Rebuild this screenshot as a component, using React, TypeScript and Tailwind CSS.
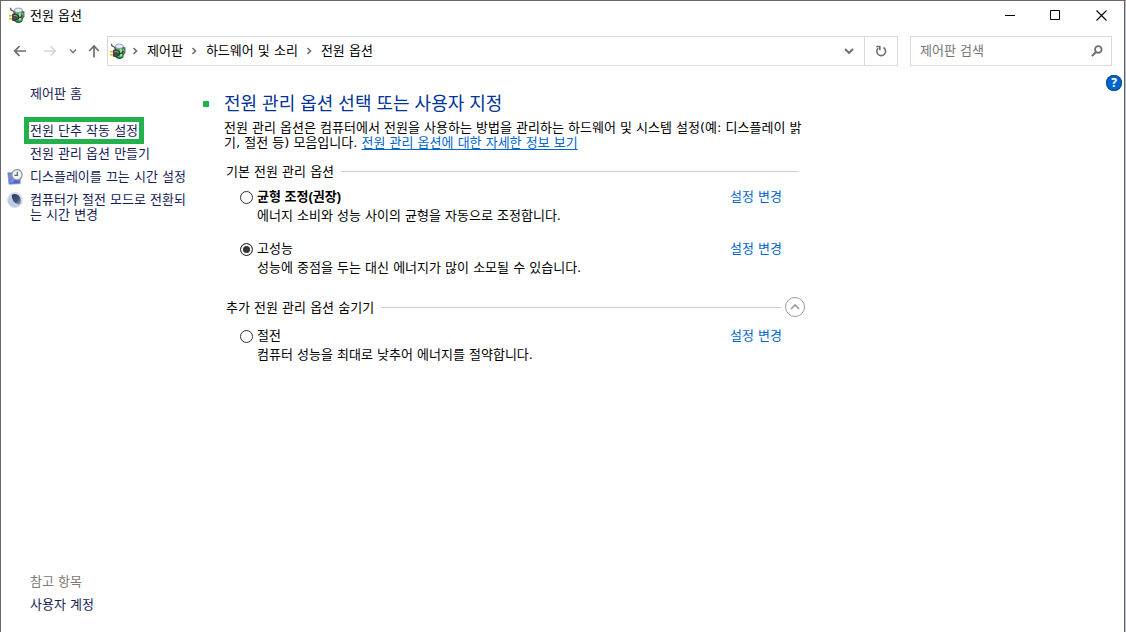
import type { ReactNode } from "react"

type Plan = {
  id: string
  name: string
  description: string
  recommended?: boolean
}

const mainPlans: Plan[] = [
  { id: "balanced", name: "균형 조정(권장)", description: "에너지 소비와 성능 사이의 균형을 자동으로 조정합니다.", recommended: true },
  { id: "high", name: "고성능", description: "성능에 중점을 두는 대신 에너지가 많이 소모될 수 있습니다." },
]

const extraPlans: Plan[] = [
  { id: "saver", name: "절전", description: "컴퓨터 성능을 최대로 낮추어 에너지를 절약합니다." },
]

const crumbs = ["제어판", "하드웨어 및 소리", "전원 옵션"]

function PowerIcon() {
  return (
    <svg width="17" height="17" viewBox="0 0 17 17" className="shrink-0" aria-hidden="true">
      <path d="M13 5h1.800v4.500L13 12" fill="none" stroke="#5b665d" strokeWidth="1.300" />
      <path d="M5.500 3.500h7.700v10.300q-3.800 3.400-7.700 0z" fill="#3fb152" stroke="#45584a" strokeWidth=".8" />
      <path d="M11 6v7.500" stroke="#9cf0a4" strokeWidth="1.600" />
      <path d="M6 13.800q3.400 2.600 7 0" fill="none" stroke="#22763a" strokeWidth="1.600" />
      <ellipse cx="9.300" cy="3.300" rx="3.900" ry="2.300" fill="#e3e9f7" stroke="#8990a0" strokeWidth=".8" />
      <path d="M1.500.800c-.2 2 .6 2.600 2 2.800 1.500.200 1.300 1.600 1.800 3" fill="none" stroke="#55585e" strokeWidth="1.200" />
      <path d="M0 8.700h4M0 11.700h4" stroke="#e3b90f" strokeWidth="1.500" />
      <path d="M3.600 7h3l3 1.700v3l-3 1.700h-3z" fill="#4a4a50" stroke="#26262a" strokeWidth=".8" />
      <path d="M4.500 8.500h2.300l1.700.900" fill="none" stroke="#a5a5ac" strokeWidth=".9" />
      <path d="M9.500 10.300h1.600q1.900 0 1.900-2.300" fill="none" stroke="#3a3a3e" strokeWidth="1.300" />
    </svg>
  )
}

function DisplayIcon() {
  return (
    <svg width="16" height="16" viewBox="0 0 16 16" className="shrink-0" aria-hidden="true">
      <path d="M.8 3.800h12.400v10.900l-11.200.500z" fill="#4a63d8" stroke="#9aa0b4" strokeWidth=".9" />
      <path d="M1.800 4.800h5v8.500l-4 .6z" fill="#6f8bf0" />
      <circle cx="10" cy="5.800" r="5.200" fill="#f2f3f5" stroke="#909499" strokeWidth="1.300" />
      <path d="M10.300 2.800v3.500H7.500" fill="none" stroke="#55606f" strokeWidth="1.200" />
    </svg>
  )
}

function SleepIcon() {
  return (
    <svg width="16" height="16" viewBox="0 0 16 16" className="shrink-0" aria-hidden="true">
      <defs>
        <linearGradient id="moon-body" x1="1" y1="0" x2="0" y2="1">
          <stop offset="0" stopColor="#e9ebef" />
          <stop offset="1" stopColor="#a9bfe8" />
        </linearGradient>
        <linearGradient id="moon-shade" x1="0" y1="0" x2="1" y2="1">
          <stop offset="0" stopColor="#2b3a55" />
          <stop offset=".6" stopColor="#44557a" />
          <stop offset="1" stopColor="#9aa7c0" />
        </linearGradient>
      </defs>
      <circle cx="8" cy="8" r="7.400" fill="url(#moon-body)" stroke="#d3d8e0" strokeWidth=".8" />
      <path d="M4.800 2.800Q8 1 11 3q3.300 2.400 2.700 7.500-.5 2-2 2-3.200-.4-5.200-3.200T4.800 2.800z" fill="url(#moon-shade)" />
    </svg>
  )
}

function Chevron({ className }: { className: string }) {
  return (
    <svg width="8" height="8" viewBox="0 0 8 8" className={className} fill="none" stroke="currentColor" strokeWidth="1.600" aria-hidden="true">
      <path d="M2.500 1 5.500 4l-3 3" />
    </svg>
  )
}

function TitleBar() {
  return (
    <header className="flex h-7 items-center pl-2">
      <PowerIcon />
      <h1 className="ml-1 flex-1 text-[13px] leading-[15px]">전원 옵션</h1>
      <button type="button" aria-label="최소화" className="flex h-7 w-[46px] items-center justify-center">
        <svg width="11" height="11" viewBox="0 0 11 11" stroke="#000"><path d="M1 5.500h10" /></svg>
      </button>
      <button type="button" aria-label="최대화" className="flex h-7 w-[46px] items-center justify-center">
        <svg width="11" height="11" viewBox="0 0 11 11" fill="none" stroke="#000"><path d="M.5.500h9v9h-9z" /></svg>
      </button>
      <button type="button" aria-label="닫기" className="flex h-7 w-[46px] items-center justify-center">
        <svg width="11" height="11" viewBox="0 0 11 11" stroke="#000" strokeWidth="1.100"><path d="m.5.500 10 10m0-10-10 10" /></svg>
      </button>
    </header>
  )
}

function NavBar() {
  return (
    <div className="flex items-center pt-[7px] pr-3 pl-3">
      <button type="button" aria-label="뒤로" className="w-4 text-[#6d6d6d]">
        <svg width="14" height="12" viewBox="0 0 14 12" fill="none" stroke="currentColor" strokeWidth="1.700"><path d="M13 6H2M6.500 1.200 1.700 6l4.800 4.800" /></svg>
      </button>
      <button type="button" aria-label="앞으로" className="ml-[14px] w-4 text-[#d5d5d5]">
        <svg width="14" height="12" viewBox="0 0 14 12" fill="none" stroke="currentColor" strokeWidth="1.500"><path d="M1 6h11M7.500 1.200 12.300 6l-4.800 4.800" /></svg>
      </button>
      <button type="button" aria-label="최근 위치" className="ml-[10px] w-2 text-[#7b7b7b]">
        <Chevron className="rotate-90" />
      </button>
      <button type="button" aria-label="위로" className="ml-[11px] w-[14px] text-[#6d6d6d]">
        <svg width="12" height="14" viewBox="0 0 12 14" fill="none" stroke="currentColor" strokeWidth="1.700"><path d="M6 13.500V2M1.200 7 6 2l4.800 5" /></svg>
      </button>
      <nav aria-label="주소" className="ml-[5px] flex h-[30px] flex-1 items-center border border-[#d9d9d9] pl-[2px]">
        <PowerIcon />
        {crumbs.map((crumb) => (
          <span key={crumb} className="flex items-center pr-[3px]">
            <Chevron className="mr-2 ml-1 text-[#6d6d6d]" />
            <a href="#" className="pb-[2px] text-[13px] leading-[15px]">{crumb}</a>
          </span>
        ))}
        <button type="button" aria-label="이전 위치" className="ml-auto flex w-[31px] justify-center text-[#6d6d6d]">
          <svg width="10" height="8" viewBox="0 0 10 8" fill="none" stroke="currentColor" strokeWidth="1.900"><path d="m1 2 4 4 4-4" /></svg>
        </button>
        <button type="button" aria-label="새로 고침" className="flex h-full w-[33px] items-center justify-center border-l border-[#d9d9d9] text-[#6d6d6d]">
          <svg width="12" height="12" viewBox="0 0 12 12" fill="none" stroke="currentColor" strokeWidth="1.600">
            <path d="M8.500 2.500A4.400 4.400 0 1 1 3.200 3" />
            <path d="M1.200 1.500h3.600v3.800" />
          </svg>
        </button>
      </nav>
      <form className="ml-3 flex h-[30px] w-[202px] items-center border border-[#d9d9d9] pr-2 pl-[9px]">
        <input type="search" aria-label="제어판 검색" placeholder="제어판 검색" className="min-w-0 flex-1 pb-[2px] text-[13px] leading-[15px] outline-none placeholder:text-[#767676]" />
        <button type="submit" aria-label="검색">
          <svg width="12" height="12" viewBox="0 0 12 12" fill="none" stroke="#6d6d6d"><circle cx="7.300" cy="4.500" r="3.300" strokeWidth="1.700" /><path d="M5 7 .8 11.200" strokeWidth="1.900" /></svg>
        </button>
      </form>
    </div>
  )
}

function SideLink({ icon, children }: { icon?: ReactNode; children: ReactNode }) {
  return (
    <li className="flex items-start gap-[7px]">
      <span className="h-[15px] w-4 shrink-0">{icon}</span>
      <a href="#">{children}</a>
    </li>
  )
}

function Sidebar() {
  return (
    <aside className="flex w-[190px] shrink-0 flex-col pt-5 pb-5 pl-[6px] text-[#151c55]">
      <a href="#" className="pl-[23px]">제어판 홈</a>
      <ul className="mt-[22px] flex flex-col gap-2">
        <SideLink>
          <span className="outline-5 outline-offset-1 outline-[#22b14c]">전원 단추 작동 설정</span>
        </SideLink>
        <SideLink>전원 관리 옵션 만들기</SideLink>
        <SideLink icon={<DisplayIcon />}>디스플레이를 끄는 시간 설정</SideLink>
        <SideLink icon={<SleepIcon />}>컴퓨터가 절전 모드로 전환되는 시간 변경</SideLink>
      </ul>
      <div className="mt-auto flex flex-col gap-2 pl-[23px]">
        <h2 className="text-[#7f7a75]">참고 항목</h2>
        <a href="#">사용자 계정</a>
      </div>
    </aside>
  )
}

function PlanRow({ plan, checked }: { plan: Plan; checked?: boolean }) {
  return (
    <div className="flex items-start pr-[23px] pl-4">
      <input
        type="radio"
        name="plan"
        id={plan.id}
        defaultChecked={checked}
        className="mt-[2px] size-[13px] shrink-0 appearance-none rounded-full border border-[#333] bg-white checked:bg-[#333] checked:inset-ring-2 checked:inset-ring-white"
      />
      <div className="ml-1 flex-1">
        <label
          htmlFor={plan.id}
          className={plan.recommended ? "block font-['Liberation_Sans','Noto_Sans_CJK_KR',sans-serif] font-bold" : "block"}
        >
          {plan.name}
        </label>
        <p className="mt-1">{plan.description}</p>
      </div>
      <a href="#" className="text-[#0066cc]">설정 변경</a>
    </div>
  )
}

function PowerOptions() {
  return (
    <main className="w-full max-w-[602px] pt-7">
      <div className="flex items-center">
        <span className="size-[6px] bg-[#22b14c]" />
        <h2 className="ml-[15px] font-['Liberation_Sans','Noto_Sans_CJK_KR',sans-serif] text-lg leading-5 text-[#003399]">
          전원 관리 옵션 선택 또는 사용자 지정
        </h2>
      </div>
      <div className="pl-[21px]">
        <p className="mt-[6px]">
          전원 관리 옵션은 컴퓨터에서 전원을 사용하는 방법을 관리하는 하드웨어 및 시스템 설정(예: 디스플레이 밝기, 절전 등) 모음입니다.{" "}
          <a href="#" className="text-[#0066cc] underline underline-offset-2">전원 관리 옵션에 대한 자세한 정보 보기</a>
        </p>
        <section className="mt-[14px]">
          <div className="flex items-center gap-[7px] pr-[6px] pl-[2px]">
            <h3>기본 전원 관리 옵션</h3>
            <span className="h-px flex-1 bg-[#cccccc]" />
          </div>
          <div className="mt-[10px] flex flex-col gap-[18px]">
            {mainPlans.map((plan) => (
              <PlanRow key={plan.id} plan={plan} checked={plan.id === "high"} />
            ))}
          </div>
        </section>
        <section className="mt-[22px]">
          <div className="flex items-center pl-[2px]">
            <h3>추가 전원 관리 옵션 숨기기</h3>
            <span className="mr-1 ml-[7px] h-px flex-1 bg-[#cccccc]" />
            <button type="button" aria-label="추가 전원 관리 옵션 숨기기" className="flex size-5 items-center justify-center rounded-full border border-[#999]">
              <svg width="10" height="8" viewBox="0 0 10 8" fill="none" stroke="#999" strokeWidth="1.700"><path d="m1 6 4-4 4 4" /></svg>
            </button>
          </div>
          <div className="mt-[11px]">
            {extraPlans.map((plan) => (
              <PlanRow key={plan.id} plan={plan} />
            ))}
          </div>
        </section>
      </div>
    </main>
  )
}

function App() {
  return (
    <div className="flex min-h-screen flex-col border-t border-r border-l border-t-[#6b6768] border-r-[#b9bec6] border-l-[#6b6768] bg-white font-['DejaVu_Sans','Noto_Sans_CJK_KR',sans-serif] text-[13px] leading-[15px] text-black">
      <div className="flex flex-1 flex-col border-r border-[#5d6167]">
        <TitleBar />
        <NavBar />
        <div className="flex flex-1">
          <Sidebar />
          <div className="flex min-w-0 flex-1 pl-3">
            <PowerOptions />
          </div>
          <button type="button" aria-label="도움말" className="mt-[9px] mr-[2px] flex size-4 items-center justify-center rounded-full bg-[#0066cc] font-['Open_Sans',sans-serif] text-xs font-bold text-white ring ring-[#0b4f8f] ring-inset">
            ?
          </button>
        </div>
      </div>
    </div>
  )
}

export default App
